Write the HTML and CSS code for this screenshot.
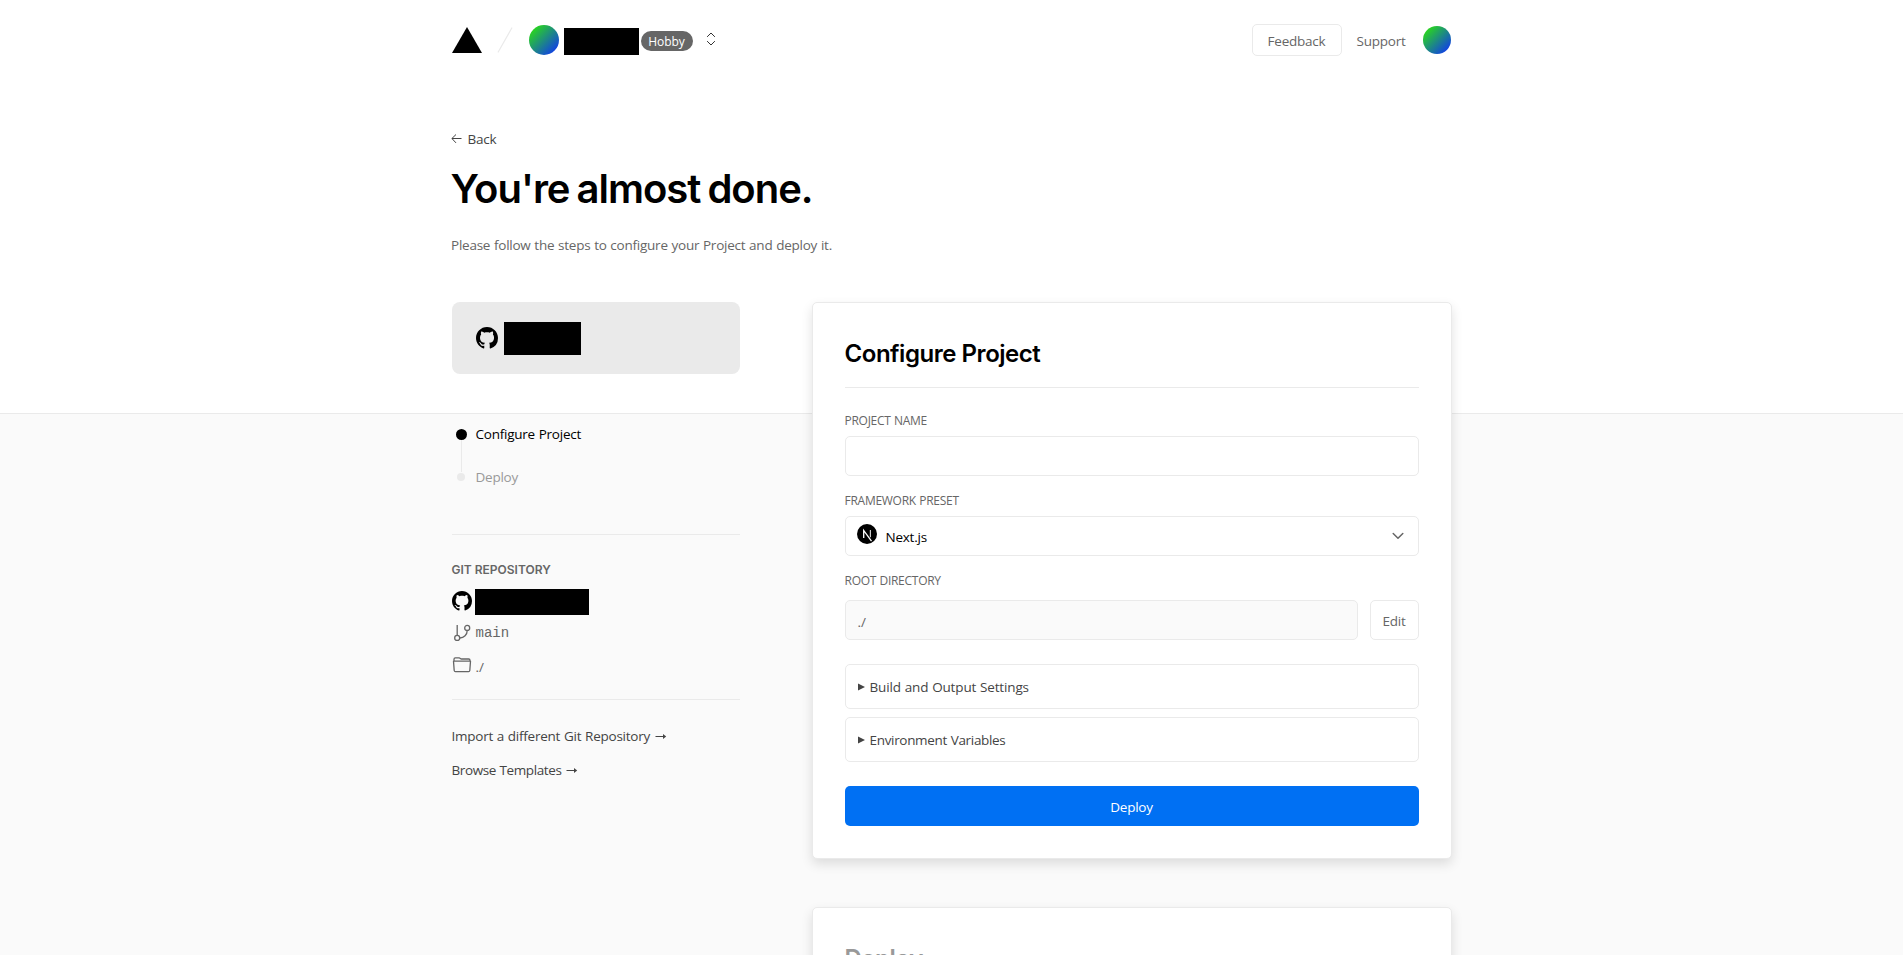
FILE: index.html
```
<!DOCTYPE html>
<html lang="en">
<head>
<meta charset="utf-8">
<title>New Project</title>
<link rel="stylesheet" href="styles.css">
</head>
<body>
<svg class="defs" width="0" height="0" aria-hidden="true">
  <symbol id="github" viewBox="0 0 16 16"><path fill="currentColor" fill-rule="evenodd" d="M8 0C3.58 0 0 3.58 0 8c0 3.54 2.29 6.53 5.47 7.59.4.07.55-.17.55-.38 0-.19-.01-.82-.01-1.49-2.01.37-2.53-.49-2.69-.94-.09-.23-.48-.94-.82-1.13-.28-.15-.68-.52-.01-.53.63-.01 1.08.58 1.23.82.72 1.21 1.87.87 2.33.66.07-.52.28-.87.51-1.07-1.78-.2-3.64-.89-3.64-3.95 0-.87.31-1.59.82-2.15-.08-.2-.36-1.02.08-2.12 0 0 .67-.21 2.2.82.64-.18 1.32-.27 2-.27s1.36.09 2 .27c1.53-1.04 2.2-.82 2.2-.82.44 1.1.16 1.92.08 2.12.51.56.82 1.27.82 2.15 0 3.07-1.87 3.75-3.65 3.95.29.25.54.73.54 1.48 0 1.07-.01 1.93-.01 2.2 0 .21.15.46.55.38A8.01 8.01 0 0 0 16 8c0-4.42-3.58-8-8-8z"/></symbol>
</svg>

<header class="header">
  <svg class="logo" width="30" height="26" viewBox="0 0 30 26"><path d="M15 0l15 26H0z"/></svg>
  <svg class="slash" width="16" height="26" viewBox="0 0 16 26"><path d="M1.2 25L14.8 1" stroke="#eaeaea" stroke-width="1.2" stroke-linecap="round"/></svg>
  <span class="avatar avatar-team"></span>
  <span class="redacted team-name"></span>
  <span class="badge">Hobby</span>
  <svg class="updown" width="10" height="14" viewBox="0 0 10 14" fill="none" stroke="#333" stroke-width="1" stroke-linecap="round" stroke-linejoin="round"><path d="M1.4 4.6L5 1l3.6 3.6M1.4 9.4L5 13l3.6-3.6"/></svg>
  <button class="button feedback">Feedback</button>
  <a class="support">Support</a>
  <span class="avatar"></span>
</header>

<main class="main">
  <a class="back"><svg width="11" height="10" viewBox="0 0 11 10" fill="none" stroke="#444" stroke-width="1"><path d="M10.5 4.5H1M5 .5L.9 4.500 5 8.9"/></svg>Back</a>
  <h1 class="heading">You're almost done.</h1>
  <p class="lead">Please follow the steps to configure your Project and deploy it.</p>

  <div class="columns">
    <aside class="side">
      <div class="repo-card">
        <svg width="22" height="22"><use href="#github"/></svg>
        <span class="redacted repo-name"></span>
      </div>
      <ol class="steps">
        <li class="step active"><span class="dot"></span>Configure Project</li>
        <li class="step"><span class="dot"></span>Deploy</li>
      </ol>
      <section class="git">
        <h4 class="git-title">GIT REPOSITORY</h4>
        <div class="git-row git-repo"><svg width="20" height="20"><use href="#github"/></svg><span class="redacted git-name"></span></div>
        <div class="git-row git-branch">
          <svg width="20" height="20" viewBox="0 0 20 20" fill="none" stroke="#666" stroke-width="1.3"><path d="M5.2 2v10.2M15.200 7.400c0 4.300-3.200 7.600-7.400 7.600"/><circle cx="15.200" cy="4.900" r="2.500"/><circle cx="5.200" cy="14.900" r="2.500"/></svg>
          <span class="mono">main</span>
        </div>
        <div class="git-row git-folder">
          <svg width="20" height="20" viewBox="0 0 20 20" fill="none" stroke="#666" stroke-width="1.3" stroke-linejoin="round"><path d="M2 6.200V4.200c0-.8.500-1.300 1.300-1.300h3.900c.9 0 1.300 1.100 2.200 1.100h7.300c.8 0 1.300.5 1.300 1.300v.9M1.500 6.200h17l-.7 9.300c-.1.700-.5 1.100-1.200 1.100H3.400c-.7 0-1.100-.4-1.200-1.100z"/></svg>
          <span class="path">./</span>
        </div>
      </section>
      <nav class="links">
        <a>Import a different Git Repository <svg width="12" height="7" viewBox="0 0 12 7"><path d="M.5 3.500h9.500" stroke="#444"/><path d="M8 1l3.200 2.500L8 6z" fill="#444"/></svg></a>
        <a class="browse">Browse Templates <svg width="12" height="7" viewBox="0 0 12 7"><path d="M.5 3.500h9.500" stroke="#444"/><path d="M8 1l3.200 2.500L8 6z" fill="#444"/></svg></a>
      </nav>
    </aside>

    <div class="cards">
      <section class="card">
        <h2 class="card-title">Configure Project</h2>
        <div class="label">PROJECT NAME</div>
        <div class="field"></div>
        <div class="label">FRAMEWORK PRESET</div>
        <div class="field select">
          <svg class="next" width="20" height="20" viewBox="0 0 20 20"><circle cx="10" cy="10" r="10"/><path d="M6.700 14V6.400l7.800 10.800" fill="none" stroke="#fff" stroke-width="1.300"/><path d="M13.400 6v7.300" stroke="#ccc" stroke-width="1.200"/></svg>
          <span>Next.js</span>
          <svg class="chevron" width="12" height="8" viewBox="0 0 12 8" fill="none" stroke="#666" stroke-width="1.500" stroke-linecap="round" stroke-linejoin="round"><path d="M1.200 1.500L6 6.300l4.800-4.800"/></svg>
        </div>
        <div class="label">ROOT DIRECTORY</div>
        <div class="root-row">
          <div class="field disabled">./</div>
          <button class="button edit">Edit</button>
        </div>
        <div class="details build"><svg width="7" height="8" viewBox="0 0 7 8"><path d="M0 .5l7 3.500-7 3.500z" fill="#444"/></svg>Build and Output Settings</div>
        <div class="details env"><svg width="7" height="8" viewBox="0 0 7 8"><path d="M0 .5l7 3.500-7 3.500z" fill="#444"/></svg>Environment Variables</div>
        <button class="deploy">Deploy</button>
      </section>
      <section class="card">
        <h2 class="card-title muted">Deploy</h2>
      </section>
    </div>
  </div>
</main>
</body>
</html>
```
FILE: styles.css
```
* { box-sizing: border-box; }
html { height: 100%; overflow: hidden; }
body {
  margin: 0;
  height: 100%;
  overflow: hidden;
  background: linear-gradient(#fff 413px, #eaeaea 413px, #eaeaea 414px, #fafafa 414px);
  font: 13.5px/20px "Open Sans", "Noto Sans", sans-serif;
  letter-spacing: -0.24px;
  word-spacing: 0.5px;
  color: #000;
}
svg { display: block; flex: none; }
.defs { position: absolute; }
h1, h2, h4, p, ol { margin: 0; padding: 0; }
.redacted { background: #000; flex: none; }

.header, .main { width: 1000px; margin: 0 auto; }
.header { height: 80px; display: flex; align-items: center; white-space: nowrap; }
.logo { margin: 0 15px 0 0; }
.slash { margin-right: 16px; }
.avatar { width: 28px; height: 28px; border-radius: 50%; background: linear-gradient(135deg, #2be010 8%, #1038f0 92%); }
.avatar-team { width: 30px; height: 30px; }
.team-name { width: 75px; height: 27px; margin: 3px 2px 0 5px; }
.badge { width: 52px; height: 20px; margin-top: 2px; border-radius: 10px; background: #666; color: #fff; font-size: 12px; line-height: 21px; letter-spacing: -0.1px; text-align: center; }
.updown { margin-left: 13px; margin-top: -2px; }

.button { padding: 0; border: 1px solid #eaeaea; border-radius: 5px; background: #fff; color: #666; font: inherit; letter-spacing: inherit; }
.feedback { width: 90px; height: 32px; margin-left: auto; line-height: 32px; }
.support { color: #666; margin: 0 17px 0 15px; padding-top: 1px; line-height: 32px; }
.header > .avatar:last-child { margin-right: 1px; }

.main { padding-top: 49px; }
.back { display: flex; align-items: center; gap: 6px; margin-left: -1px; color: #444; }
.back svg { margin-top: -1px; }
.heading { margin: 16px 0 0 -1px; font: 600 40px/48px Inter, sans-serif; letter-spacing: -1.02px; word-spacing: -2px; }
.lead { margin-top: 22px; margin-left: -0.5px; color: #666; }

.columns { display: grid; grid-template-columns: 288px 640px; column-gap: 72px; margin-top: 47px; align-items: start; }
.repo-card { height: 72px; padding-left: 24px; border-radius: 8px; background: #eaeaea; display: flex; align-items: center; gap: 6px; }
.repo-name { width: 77px; height: 33px; }

.steps { list-style: none; margin-top: 50px; display: flex; flex-direction: column; gap: 23px; }
.step { display: flex; align-items: center; color: #999; position: relative; }
.step.active { color: #000; }
.dot { width: 8px; height: 8px; margin: 0 11px 0 5px; border-radius: 50%; background: #eaeaea; }
.active .dot { width: 11px; height: 11px; margin: 0 9px 0 4px; background: #000; }
.step.active::after { content: ""; position: absolute; left: 9px; top: 16px; width: 1px; height: 32px; background: #eaeaea; }

.git { margin-top: 47px; padding: 27px 0 24px; border: solid #eaeaea; border-width: 1px 0; }
.git-title { font: 600 12px/16px Inter, sans-serif; letter-spacing: 0; word-spacing: 0; color: #666; }
.git-row { display: flex; align-items: center; gap: 3px; color: #666; }
.git-repo { margin-top: 11px; height: 26px; color: #000; }
.git-repo svg { margin-top: -2px; }
.git-name { width: 114px; height: 26px; }
.git-branch { margin-top: 8px; height: 20px; }
.git-folder { margin-top: 12px; height: 20px; }
.mono { margin-left: 1px; font: 14px/20px "Liberation Mono", monospace; letter-spacing: 0; }
.path { padding-top: 3px; letter-spacing: 0; margin-left: 1px; }
.links { display: flex; flex-direction: column; gap: 14px; margin-top: 26px; color: #444; }
.links a { display: flex; align-items: center; gap: 5px; }
.links .browse { letter-spacing: -0.4px; }

.cards { display: flex; flex-direction: column; gap: 48px; }
.card { padding: 35px 32px 32px; border: 1px solid #eaeaea; border-radius: 5px; background: #fff; box-shadow: 0 5px 12px rgba(0, 0, 0, .12); }
.card-title { padding-bottom: 17px; margin-bottom: 25px; border-bottom: 1px solid #eaeaea; font: 600 24px/32px Inter, sans-serif; letter-spacing: -0.46px; word-spacing: 0; }
.muted { color: #999; }
.label { margin-bottom: 7px; font-size: 12px; line-height: 16px; letter-spacing: -0.27px; color: #666; }
.field { height: 40px; margin-bottom: 17px; border: 1px solid #eaeaea; border-radius: 5px; background: #fff; display: flex; align-items: center; }
.select { padding: 2px 14px 0 11px; gap: 9px; }
.next { margin-top: -7px; }
.chevron { margin: -2px 0 0 auto; }
.root-row { display: flex; gap: 12px; margin-top: 11px; }
.root-row .field { flex: 1; margin: 0; padding: 3px 12px 0; background: #fafafa; color: #666; letter-spacing: 0; }
.edit { width: 49px; height: 40px; padding-top: 2px; }
.details { height: 45px; padding: 1px 12px 0; border: 1px solid #eaeaea; border-radius: 5px; color: #444; display: flex; align-items: center; gap: 5px; }
.build { margin-top: 24px; letter-spacing: -0.15px; }
.env { margin-top: 8px; letter-spacing: -0.32px; }
.deploy { display: block; width: 100%; height: 40px; margin-top: 24px; padding: 2px 0 0; border: 0; border-radius: 5px; background: #0070f3; color: #fff; font: inherit; letter-spacing: inherit; }
```
